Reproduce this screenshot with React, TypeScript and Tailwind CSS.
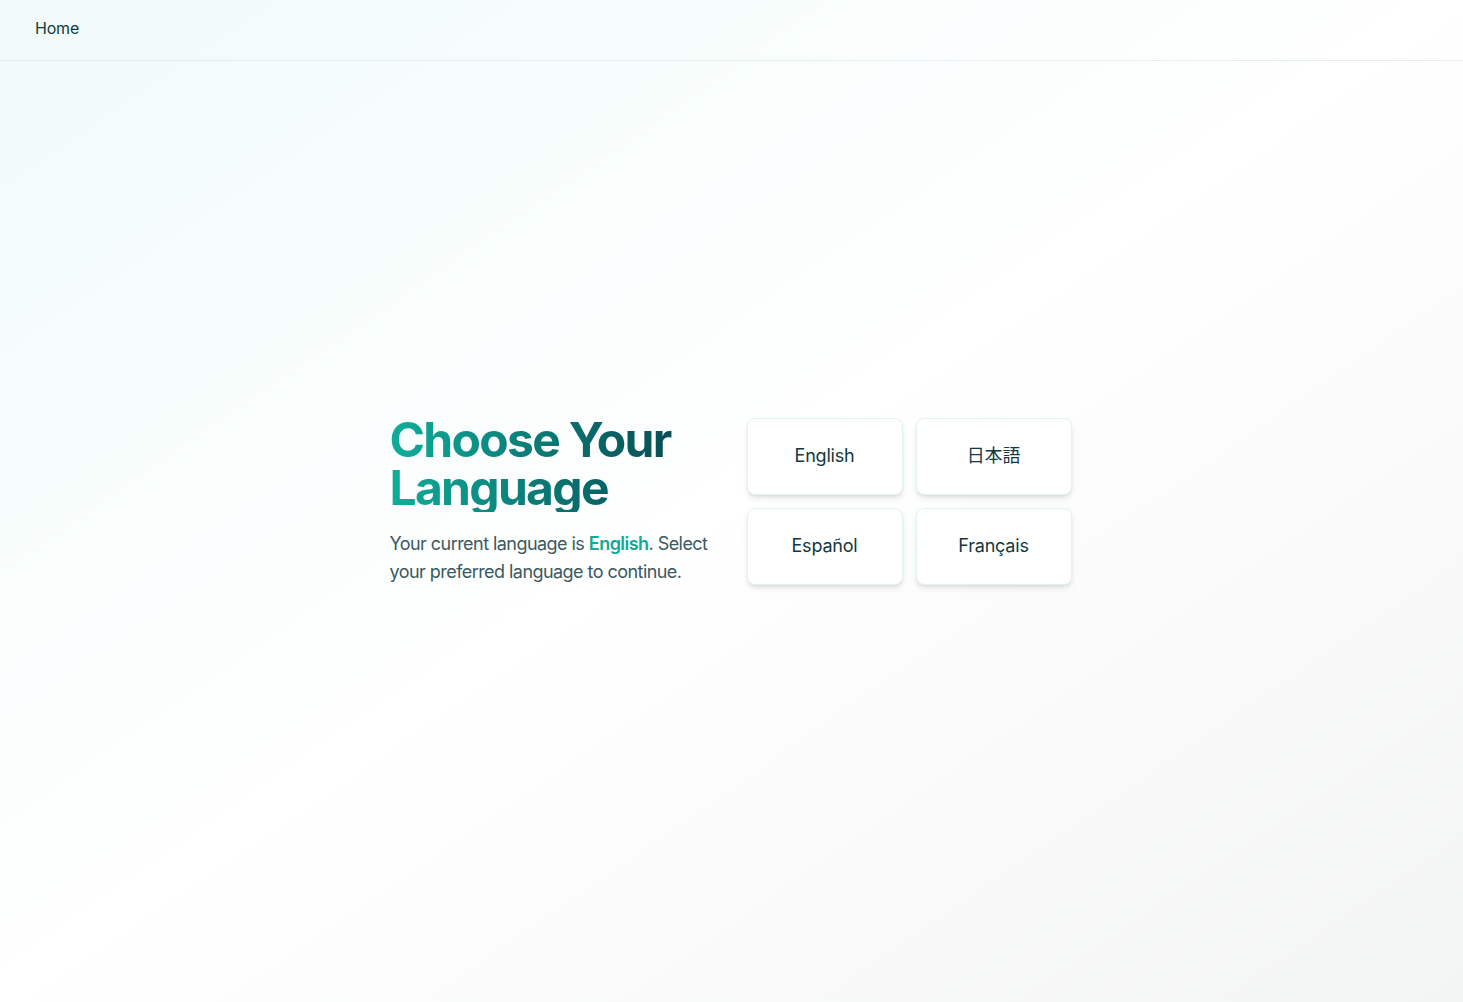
import React from "react";

const langs = ["English", "日本語", "Español", "Français"];

export default function App() {
  return (
    <div
      className="h-screen flex flex-col bg-gradient-to-br from-[#f0fbfa] via-white to-[#f3f4f4]"
      style={{ fontFamily: 'Inter, "Noto Sans CJK JP", sans-serif' }}
    >
      <header className="h-[61px] shrink-0 flex items-center px-[35px] pb-[4px] border-b border-[#e2eaea]/80">
        <a className="text-base tracking-[-0.2px] text-[#0f3a40]">Home</a>
      </header>
      <main className="flex-1 flex items-center justify-center pb-[61px] pr-[2px]">
        <div className="flex items-center gap-[27px]">
          <div className="w-[330px]">
            <h1 className="text-[48px] leading-[48px] font-bold tracking-[-1.7px] bg-gradient-to-r from-[#0fae9a] to-[#063f4a] bg-clip-text text-transparent">
              Choose Your Language
            </h1>
            <p className="mt-[18px] text-lg leading-7 tracking-[-0.55px] text-[#3b5961]">
              Your current language is{" "}
              <span className="font-semibold text-[#12a999]">English</span>.
              Select your preferred language to continue.
            </p>
          </div>
          <div className="grid grid-cols-2 gap-[13px]">
            {langs.map((l) => (
              <button
                key={l}
                className="w-[156px] h-[77px] flex items-center justify-center bg-white rounded-lg border border-[#e3f3f1] shadow-md text-lg tracking-[-0.2px] text-[#0f3a40]"
              >
                {l}
              </button>
            ))}
          </div>
        </div>
      </main>
    </div>
  );
}
